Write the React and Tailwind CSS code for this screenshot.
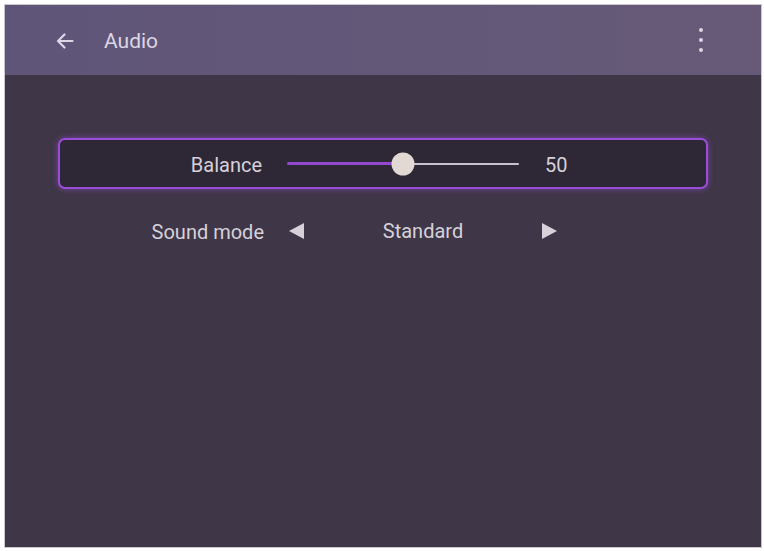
const Triangle = ({ dir }) => (
  <svg width="17" height="18" viewBox="0 0 17 18" className="shrink-0">
    {dir === "left" ? (
      <path d="M16 1 L1 9 L16 17 Z" fill="#d7d1da" />
    ) : (
      <path d="M1 1 L16 9 L1 17 Z" fill="#d7d1da" />
    )}
  </svg>
);

const BalanceSlider = ({ value }) => (
  <div className="relative flex h-6 w-[232px] items-center">
    <div className="h-[3px] rounded-full bg-[#9448cf]" style={{ width: `${value}%` }} />
    <div className="h-[2px] flex-1 rounded-full bg-[#c8c2cc]" />
    <div
      className="absolute top-1/2 h-[23px] w-[23px] -translate-x-1/2 -translate-y-1/2 rounded-full bg-[#e2d9d5]"
      style={{ left: `${value}%` }}
    />
  </div>
);

export default function App() {
  return (
    <div className="h-[551px] w-[764px] bg-white pl-[5px] pt-[5px] font-['Roboto',sans-serif]">
      <div className="flex h-[542px] w-[756px] flex-col bg-[#3f3647] shadow-[0_0_0_1px_#c9c6cc]">
        <header className="flex h-[70px] items-center bg-gradient-to-r from-[#5f5578] to-[#675a78] pl-[51px] pr-[58px] text-[#ddd6e6]">
          <svg width="18" height="16" viewBox="0 0 18 16" fill="none" stroke="#ddd6e6" strokeWidth="2.2" strokeLinecap="round" strokeLinejoin="round" className="mt-[1px]">
            <path d="M16.5 8 H2 M8.5 1.5 L2 8 L8.5 14.5" />
          </svg>
          <span className="ml-[30px] mt-[3px] text-[21px]">Audio</span>
          <div className="ml-auto flex flex-col items-center gap-[6px]">
            <span className="h-[4px] w-[4px] rounded-full bg-[#ddd6e6]" />
            <span className="h-[4px] w-[4px] rounded-full bg-[#ddd6e6]" />
            <span className="h-[4px] w-[4px] rounded-full bg-[#ddd6e6]" />
          </div>
        </header>

        <div className="px-[53px] pt-[63px] text-[20px] text-[#d6d1da]">
          <div className="flex h-[51px] items-center rounded-[7px] border-2 border-[#9a4dd8] bg-[#2e2836] shadow-[0_0_6px_rgba(160,80,230,0.55)]">
            <span className="mt-[3px] w-[202px] text-right">Balance</span>
            <div className="ml-[25px]">
              <BalanceSlider value={50} />
            </div>
            <span className="ml-[26px] mt-[3px]">50</span>
          </div>

          <div className="mt-[23px] flex h-[38px] items-center">
            <span className="mt-[2px] w-[206px] text-right">Sound mode</span>
            <div className="ml-[24px]">
              <Triangle dir="left" />
            </div>
            <span className="w-[236px] text-center">Standard</span>
            <Triangle dir="right" />
          </div>
        </div>
      </div>
    </div>
  );
}
